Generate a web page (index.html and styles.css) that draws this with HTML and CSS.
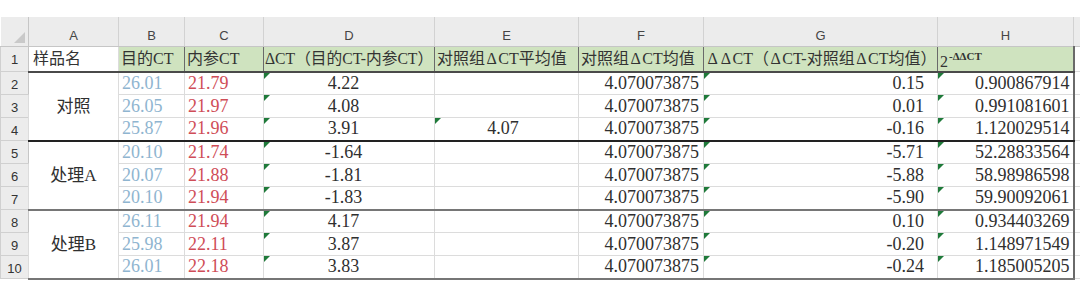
FILE: index.html
```html
<!DOCTYPE html>
<html lang="zh-CN">
<head>
<meta charset="utf-8">
<title>ΔΔCT</title>
<link rel="stylesheet" href="styles.css">
</head>
<body>
<div class="sheet">
<table class="grid">
  <colgroup>
    <col class="w-rh"><col class="w-a"><col class="w-b"><col class="w-c"><col class="w-d"><col class="w-e"><col class="w-f"><col class="w-g"><col class="w-h"><col class="w-pad">
  </colgroup>
  <thead>
    <tr class="hdr">
      <th class="corner"></th><th>A</th><th>B</th><th>C</th><th>D</th><th>E</th><th>F</th><th>G</th><th>H</th><th class="pad"></th>
    </tr>
  </thead>
  <tbody>
    <tr class="r1">
      <th class="rn">1</th>
      <td class="a1">样品名</td>
      <td class="gh">目的CT</td>
      <td class="gh">内参CT</td>
      <td class="gh tight">ΔCT（目的CT-内参CT）</td>
      <td class="gh">对照组<span class="dl">Δ</span>CT平均值</td>
      <td class="gh">对照组<span class="dl">Δ</span>CT均值</td>
      <td class="gh"><span class="dl">Δ</span><span class="dl">Δ</span>CT（<span class="dl">Δ</span>CT-对照组<span class="dl">Δ</span>CT均值）</td>
      <td class="gh last">2<sup>-ΔΔCT</sup></td>
      <td class="pad"></td>
    </tr>
    <tr>
      <th class="rn">2</th>
      <td class="grp end-k" rowspan="3">对照</td>
      <td class="b">26.01</td><td class="c">21.79</td><td class="d t">4.22</td><td class="e"></td><td class="f">4.070073875</td><td class="g t">0.15</td><td class="h t">0.900867914</td><td class="pad"></td>
    </tr>
    <tr>
      <th class="rn">3</th>
      <td class="b">26.05</td><td class="c">21.97</td><td class="d t">4.08</td><td class="e"></td><td class="f">4.070073875</td><td class="g t">0.01</td><td class="h t">0.991081601</td><td class="pad"></td>
    </tr>
    <tr class="row-end-k">
      <th class="rn">4</th>
      <td class="b">25.87</td><td class="c">21.96</td><td class="d t">3.91</td><td class="e t">4.07</td><td class="f">4.070073875</td><td class="g t">-0.16</td><td class="h t">1.120029514</td><td class="pad"></td>
    </tr>
    <tr>
      <th class="rn">5</th>
      <td class="grp end-g" rowspan="3">处理A</td>
      <td class="b">20.10</td><td class="c">21.74</td><td class="d t">-1.64</td><td class="e"></td><td class="f">4.070073875</td><td class="g t">-5.71</td><td class="h t">52.28833564</td><td class="pad"></td>
    </tr>
    <tr>
      <th class="rn">6</th>
      <td class="b">20.07</td><td class="c">21.88</td><td class="d t">-1.81</td><td class="e"></td><td class="f">4.070073875</td><td class="g t">-5.88</td><td class="h t">58.98986598</td><td class="pad"></td>
    </tr>
    <tr class="row-end-g">
      <th class="rn">7</th>
      <td class="b">20.10</td><td class="c">21.94</td><td class="d t">-1.83</td><td class="e"></td><td class="f">4.070073875</td><td class="g t">-5.90</td><td class="h t">59.90092061</td><td class="pad"></td>
    </tr>
    <tr>
      <th class="rn">8</th>
      <td class="grp end-g" rowspan="3">处理B</td>
      <td class="b">26.11</td><td class="c">21.94</td><td class="d t">4.17</td><td class="e"></td><td class="f">4.070073875</td><td class="g t">0.10</td><td class="h t">0.934403269</td><td class="pad"></td>
    </tr>
    <tr>
      <th class="rn">9</th>
      <td class="b">25.98</td><td class="c">22.11</td><td class="d t">3.87</td><td class="e"></td><td class="f">4.070073875</td><td class="g t">-0.20</td><td class="h t">1.148971549</td><td class="pad"></td>
    </tr>
    <tr class="row-end-g">
      <th class="rn">10</th>
      <td class="b">26.01</td><td class="c">22.18</td><td class="d t">3.83</td><td class="e"></td><td class="f">4.070073875</td><td class="g t">-0.24</td><td class="h t">1.185005205</td><td class="pad"></td>
    </tr>
  </tbody>
</table>
</div>
</body>
</html>
```
FILE: styles.css
```css
* { box-sizing: border-box; }

body {
  margin: 0;
  background: #ffffff;
  font-family: "Liberation Serif", "Noto Sans CJK SC", serif;
  color: #2f2f2f;
}

.sheet {
  padding-top: 17px;
}

.grid {
  border-collapse: collapse;
  table-layout: fixed;
  width: 1080px;
}

.w-rh { width: 28px; }
.w-a { width: 90px; }
.w-b { width: 66px; }
.w-c { width: 79px; }
.w-d { width: 171px; }
.w-e { width: 144px; }
.w-f { width: 125px; }
.w-g { width: 234px; }
.w-h { width: 136px; }
.w-pad { width: 7px; }

/* column letters */
.hdr th {
  height: 29px;
  padding: 8px 0 0;
  background: #ececec;
  color: #454545;
  font: 13px "Liberation Sans", Arial, sans-serif;
  text-align: center;
  border-right: 1px solid #d2d2d2;
  border-bottom: 1px solid #c6c6c6;
}

.hdr th.corner {
  position: relative;
  border-right: 1px solid #c6c6c6;
}

.hdr th.corner::after {
  content: "";
  position: absolute;
  right: 3px;
  bottom: 3px;
  border-bottom: 11px solid #c9c9c9;
  border-left: 11px solid transparent;
}

/* row numbers */
.rn {
  background: #ececec;
  color: #333333;
  font: 13px "Liberation Sans", Arial, sans-serif;
  text-align: center;
  padding: 2px 0 0;
  border: 1px solid #d0d0d0;
  border-right-color: #c6c6c6;
}

tbody tr {
  height: 23px;
}

td {
  padding: 0 3px;
  border: 1px solid #dcdcdc;
  white-space: nowrap;
  overflow: hidden;
  font-size: 18px;
  line-height: 21px;
  vertical-align: middle;
}

/* header row 1 */
.r1 td {
  font-size: 16px;
  line-height: 19px;
  color: #333333;
  padding: 0 3px;
  border-bottom: 2px solid #4a4a4a;
}

.r1 td.a1 {
  background: #ffffff;
  padding-left: 4px;
}

.r1 td.gh {
  background: #cfe3bf;
  border-left: 1px solid #6a6a6a;
  border-right: 1px solid #6a6a6a;
  border-top: 1px solid #b9ceab;
  padding: 0 0 0 2px;
}

.r1 td.gh.tight {
  padding-left: 1px;
  font-size: 15.7px;
}

.r1 .dl {
  padding: 0 1.5px;
}

.r1 td.gh.last {
  border-right: 2px solid #6a6a6a;
}

.r1 td.last sup {
  font-size: 11px;
  font-weight: bold;
  vertical-align: 7px;
  margin-left: 1px;
}

.r1 td.pad {
  background: #ffffff;
  border-bottom-color: #dcdcdc;
  border-bottom-width: 1px;
}

/* merged group cells */
td.grp {
  text-align: center;
  font-size: 17px;
  color: #2f2f2f;
}

td.grp.end-k { border-bottom: 2px solid #222222; }
td.grp.end-g { border-bottom: 2px solid #767676; }

.row-end-k td:not(.pad) { border-bottom: 2px solid #222222; }
.row-end-g td:not(.pad) { border-bottom: 2px solid #767676; }

/* value columns */
td.b { color: #8fb5d0; }
td.c { color: #cf4d57; }
td.d { text-align: center; padding-right: 14px; }
td.e { text-align: center; padding-right: 10px; }
td.f { text-align: right; padding-right: 4px; }
td.g { text-align: right; padding-right: 13px; }
td.h {
  text-align: right;
  padding-right: 3px;
  border-right: 2px solid #6a6a6a;
}

td.pad {
  padding: 0;
  border-right: none;
}

/* "number stored as text" markers */
td.t { position: relative; }

td.t::before {
  content: "";
  position: absolute;
  left: 0;
  top: 0;
  border-top: 6px solid #1f7a3a;
  border-right: 6px solid transparent;
}
```
